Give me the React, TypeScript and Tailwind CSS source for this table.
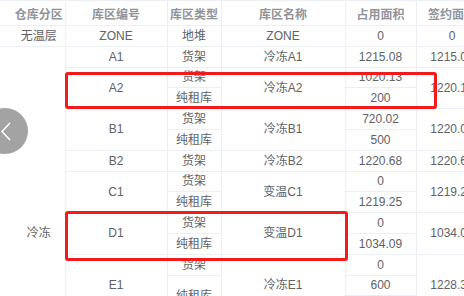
import React from 'react';

type Sub = { type?: string; typeSpan?: number; area: string };
type Group = { code: string; name: string; signed: string; subs: Sub[] };

const groups: Group[] = [
  { code: 'A1', name: '冷冻A1', signed: '1215.08', subs: [{ type: '货架', area: '1215.08' }] },
  {
    code: 'A2',
    name: '冷冻A2',
    signed: '1220.13',
    subs: [
      { type: '货架', area: '1020.13' },
      { type: '纯租库', area: '200' },
    ],
  },
  {
    code: 'B1',
    name: '冷冻B1',
    signed: '1220.02',
    subs: [
      { type: '货架', area: '720.02' },
      { type: '纯租库', area: '500' },
    ],
  },
  { code: 'B2', name: '冷冻B2', signed: '1220.68', subs: [{ type: '货架', area: '1220.68' }] },
  {
    code: 'C1',
    name: '变温C1',
    signed: '1219.25',
    subs: [
      { type: '货架', area: '0' },
      { type: '纯租库', area: '1219.25' },
    ],
  },
  {
    code: 'D1',
    name: '变温D1',
    signed: '1034.09',
    subs: [
      { type: '货架', area: '0' },
      { type: '纯租库', area: '1034.09' },
    ],
  },
  {
    code: 'E1',
    name: '冷冻E1',
    signed: '1228.30',
    subs: [
      { type: '货架', area: '0' },
      { type: '纯租库', typeSpan: 2, area: '600' },
      { area: '628.3' },
    ],
  },
  {
    code: 'E2',
    name: '冷冻E2',
    signed: '1210.50',
    subs: [
      { type: '货架', area: '0' },
      { type: '纯租库', area: '1210.5' },
    ],
  },
  { code: 'F1', name: '冷冻F1', signed: '1198.66', subs: [{ type: '货架', area: '1198.66' }] },
  {
    code: 'F2',
    name: '冷冻F2',
    signed: '1225.40',
    subs: [
      { type: '货架', area: '0' },
      { type: '纯租库', area: '1225.4' },
    ],
  },
];

const headers = ['仓库分区', '库区编号', '库区类型', '库区名称', '占用面积', '签约面积'];

const cell = 'h-[20.8px] p-0 border border-[#ebeef5] text-center align-middle whitespace-nowrap leading-none';

export default function App() {
  const frozenSpan = groups.reduce((n, g) => n + g.subs.length, 0);

  return (
    <div className="relative w-[464px] h-[296px] overflow-hidden bg-white font-['Liberation_Sans','Noto_Sans_CJK_SC',sans-serif]">
      <table className="table-fixed border-collapse w-[488px] text-[12px] text-[#606266]">
        <colgroup>
          <col className="w-[65px]" />
          <col className="w-[102px]" />
          <col className="w-[54px]" />
          <col className="w-[124px]" />
          <col className="w-[71px]" />
          <col className="w-[72px]" />
        </colgroup>
        <thead>
          <tr>
            {headers.map((h, i) => (
              <th
                key={h}
                className={`h-[25px] p-0 pt-[3px] border border-[#ebeef5] text-center font-bold text-[#909399] whitespace-nowrap leading-none ${
                  i === 0 ? 'border-l-0 pl-[13px]' : ''
                }`}
              >
                {h}
              </th>
            ))}
          </tr>
        </thead>
        <tbody>
          {/* 无温层 */}
          <tr>
            <td className={`${cell} border-l-0 pl-[13px]`}>无温层</td>
            <td className={cell}>ZONE</td>
            <td className={cell}>地堆</td>
            <td className={cell}>ZONE</td>
            <td className={cell}>0</td>
            <td className={cell}>0</td>
          </tr>

          {groups.map((g, gi) =>
            g.subs.map((s, si) => (
              <tr key={g.code + si}>
                {gi === 0 && si === 0 && (
                  <td rowSpan={frozenSpan} className={`${cell} border-l-0 pl-[13px]`}>
                    冷冻
                  </td>
                )}
                {si === 0 && (
                  <td rowSpan={g.subs.length} className={cell}>
                    {g.code}
                  </td>
                )}
                {s.type && (
                  <td rowSpan={s.typeSpan ?? 1} className={cell}>
                    {s.type}
                  </td>
                )}
                {si === 0 && (
                  <td rowSpan={g.subs.length} className={cell}>
                    {g.name}
                  </td>
                )}
                <td className={cell}>{s.area}</td>
                {si === 0 && (
                  <td rowSpan={g.subs.length} className={cell}>
                    {g.signed}
                  </td>
                )}
              </tr>
            ))
          )}
        </tbody>
      </table>

      {/* 左侧翻页按钮 */}
      <button className="absolute left-[-18px] top-[108px] w-[46px] h-[46px] rounded-full bg-[#a3a3a3] flex items-center justify-center">
        <svg width="46" height="46" viewBox="0 0 46 46" className="absolute left-0 top-0">
          <path d="M28 15 L20 23.5 L28 32" fill="none" stroke="#ffffff" strokeWidth="1.5" />
        </svg>
      </button>

      {/* 标注框 */}
      <div className="absolute left-[65px] top-[72px] w-[372px] h-[37px] border-[3px] border-[#f21b1b] rounded-[3px]" />
      <div className="absolute left-[65px] top-[211px] w-[283px] h-[50px] border-[3px] border-[#f21b1b] rounded-[3px]" />
    </div>
  );
}
